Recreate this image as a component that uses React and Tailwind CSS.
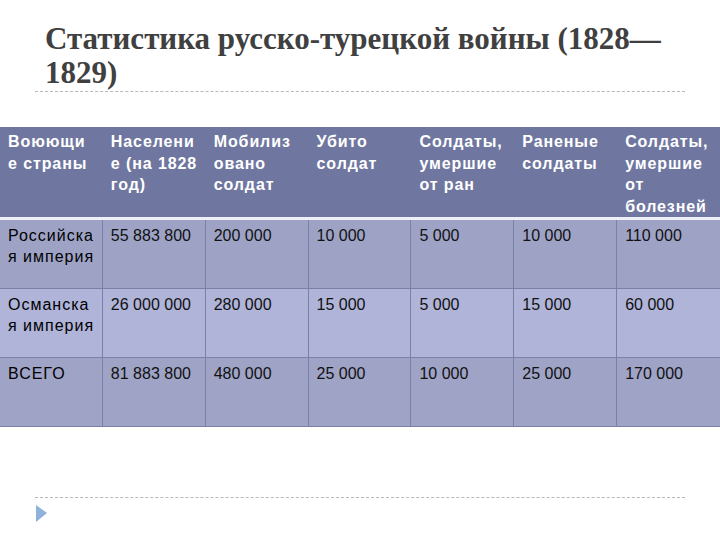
import React from "react";

const headers = [
  ["Воюющи", "е страны"],
  ["Населени", "е (на 1828", "год)"],
  ["Мобилиз", "овано", "солдат"],
  ["Убито", "солдат"],
  ["Солдаты,", "умершие", "от ран"],
  ["Раненые", "солдаты"],
  ["Солдаты,", "умершие", "от", "болезней"],
];

const rows = [
  { name: ["Российска", "я империя"], vals: ["55 883 800", "200 000", "10 000", "5 000", "10 000", "110 000"], bg: "bg-[#9ea3c6]" },
  { name: ["Османска", "я империя"], vals: ["26 000 000", "280 000", "15 000", "5 000", "15 000", "60 000"], bg: "bg-[#afb4d8]" },
  { name: ["ВСЕГО"], vals: ["81 883 800", "480 000", "25 000", "10 000", "25 000", "170 000"], bg: "bg-[#9fa3c5]" },
];

export default function App() {
  return (
    <div className="w-[720px] h-[540px] bg-white relative overflow-hidden">
      <div className="pt-[22px] pl-[45px] pr-[30px]">
        <h1
          className="text-[31px] leading-[34px] font-bold text-[#404040]"
          style={{ fontFamily: '"Liberation Serif", "DejaVu Serif", serif' }}
        >
          Статистика русско-турецкой войны (1828—
          <br />
          1829)
        </h1>
      </div>
      <div className="mx-[35px] mt-[1px] border-t border-dashed border-[#b8b8b8]" />
      <div className="mt-[35px]" style={{ fontFamily: '"Liberation Sans", Arial, sans-serif' }}>
        <div className="grid grid-cols-7 bg-[#6f77a0] h-[93px] border-b-[3px] border-[#eef0f8]">
          {headers.map((h, i) => (
            <div key={i} className="pl-[8px] pt-[4px] text-white font-bold text-[16px] leading-[21.5px] tracking-[0.9px]">
              {h.map((l, j) => (
                <div key={j} className="whitespace-nowrap">{l}</div>
              ))}
            </div>
          ))}
        </div>
        {rows.map((r, i) => (
          <div key={i} className={`grid grid-cols-7 h-[69px] ${r.bg} border-b border-[#7b80a6]`}>
            <div className="pl-[8px] pt-[5px] text-[16px] leading-[21px] text-black tracking-[1px] border-r border-[#7b80a6]">
              {r.name.map((l, j) => (
                <div key={j} className="whitespace-nowrap">{l}</div>
              ))}
            </div>
            {r.vals.map((v, j) => (
              <div
                key={j}
                className={`pl-[8px] pt-[5px] text-[16px] leading-[21px] text-[#111] ${j < 5 ? "border-r border-[#7b80a6]" : ""}`}
              >
                {v}
              </div>
            ))}
          </div>
        ))}
      </div>
      <div className="mx-[35px] mt-[70px] border-t border-dashed border-[#b8b8b8]" />
      <div className="ml-[36px] mt-[7px]">
        <svg width="12" height="18" viewBox="0 0 12 18">
          <polygon points="0,0 11,8 0,17" fill="#8fb2da" />
        </svg>
      </div>
    </div>
  );
}
